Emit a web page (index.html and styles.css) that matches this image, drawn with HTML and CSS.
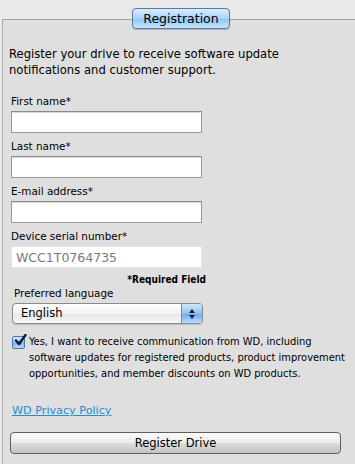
FILE: index.html
```html
<!DOCTYPE html>
<html lang="en">
<head>
    <meta charset="UTF-8">
    <meta name="viewport" content="width=device-width, initial-scale=1.0">
    <title>Registration</title>
    <link rel="stylesheet" href="styles.css">
</head>
<body>
    <div class="panel">
        <div class="tab">Registration</div>

        <p class="intro">Register your drive to receive software update notifications and customer support.</p>

        <div class="field">
            <label>First name*</label>
            <input type="text" class="text-input">
        </div>
        <div class="field">
            <label>Last name*</label>
            <input type="text" class="text-input">
        </div>
        <div class="field">
            <label>E-mail address*</label>
            <input type="text" class="text-input">
        </div>
        <div class="field">
            <label>Device serial number*</label>
            <input type="text" class="text-input serial" value="WCC1T0764735" readonly>
        </div>

        <div class="required">*Required Field</div>

        <div class="lang">
            <label>Preferred language</label>
            <div class="select">
                <span class="select-value">English</span>
                <span class="select-arrows">
                    <svg width="8" height="12" viewBox="0 0 8 12">
                        <path d="M4 1 L7 5 L1 5 Z" fill="#10204a"/>
                        <path d="M4 11 L7 7 L1 7 Z" fill="#10204a"/>
                    </svg>
                </span>
            </div>
        </div>

        <div class="optin">
            <span class="check">
                <svg width="14" height="14" viewBox="0 0 14 14">
                    <path d="M3 6.5 L6 10 L12.5 1" fill="none" stroke="#0c1a3a" stroke-width="2.4" stroke-linecap="round" stroke-linejoin="round"/>
                </svg>
            </span>
            <p>Yes, I want to receive communication from WD, including software updates for registered products, product improvement opportunities, and member discounts on WD products.</p>
        </div>

        <a href="#" class="privacy">WD Privacy Policy</a>

        <button class="register">Register Drive</button>
    </div>
</body>
</html>
```

FILE: styles.css
```css
body {
    margin: 0;
    background-color: #e9e9e9;
    font-family: "DejaVu Sans", "Liberation Sans", sans-serif;
    color: #000;
    height: 464px;
    overflow: hidden;
}
.panel {
    position: relative;
    box-sizing: border-box;
    height: 445px;
    margin: 19px 0 0 2px;
    border-top: 1px solid #a3a3a3;
    border-left: 1px solid #b0b0b0;
    background-color: #dfdfdf;
    padding: 26px 0 0 6px;
}
.tab {
    position: absolute;
    top: -12px;
    left: 129px;
    width: 96px;
    height: 19px;
    line-height: 19px;
    text-align: center;
    font-size: 12.5px;
    border: 1px solid #5a78a8;
    border-radius: 4px;
    background: linear-gradient(#d6ecff, #a9d3fb 50%, #8cc3f6 51%, #c5e6ff);
    box-shadow: 0 1px 1px rgba(0,0,0,0.2);
}
.intro {
    margin: 0 0 17px 0;
    font-size: 11.6px;
    line-height: 16px;
    width: 300px;
}
.field label,
.lang label {
    display: block;
    font-size: 10.4px;
    line-height: 13px;
    margin-left: 2px;
}
.field {
    margin-bottom: 7px;
}
.text-input {
    display: block;
    box-sizing: border-box;
    width: 191px;
    height: 22px;
    margin: 3px 0 0 2px;
    border: 1px solid #9a9a9a;
    border-top-color: #8a8a8a;
    background: #fff;
    box-shadow: inset 0 1px 1px rgba(0,0,0,0.15);
    font-family: inherit;
    font-size: 12.5px;
    padding: 0 4px;
    outline: none;
}
.serial {
    border-color: #e4e4e4;
    box-shadow: none;
    color: #7a7a7a;
}
.required {
    width: 197px;
    text-align: right;
    font-family: "DejaVu Sans Condensed", "DejaVu Sans", sans-serif;
    font-size: 10px;
    line-height: 13px;
    font-weight: bold;
    margin: -2px 0 1px 0;
}
.lang {
    margin-left: 3px;
}
.select {
    display: flex;
    box-sizing: border-box;
    width: 191px;
    height: 21px;
    margin-top: 3px;
    border: 1px solid #8a8a8a;
    border-radius: 4px;
    overflow: hidden;
    background: linear-gradient(#ffffff, #f2f2f2 50%, #e6e6e6 51%, #f7f7f7);
    box-shadow: 0 1px 1px rgba(0,0,0,0.15);
}
.select-value {
    flex: 1;
    font-size: 11.5px;
    line-height: 19px;
    padding-left: 8px;
}
.select-arrows {
    width: 20px;
    display: flex;
    align-items: center;
    justify-content: center;
    border-left: 1px solid #6b8cc4;
    background: linear-gradient(#cfe6fd, #8fc2f3 50%, #6aa9ec 51%, #b7dcfc);
}
.optin {
    display: flex;
    margin: 10px 0 0 3px;
}
.check {
    flex: none;
    box-sizing: border-box;
    width: 13px;
    height: 13px;
    margin-top: 2px;
    margin-right: 4px;
    border: 1px solid #5573a6;
    border-radius: 2px;
    background: linear-gradient(#d6ebff, #8ec1f2 50%, #6fa9e8 51%, #b9dcfb);
    position: relative;
}
.check svg {
    position: absolute;
    left: 0;
    top: -3px;
}
.optin p {
    margin: 0;
    font-family: "DejaVu Sans Condensed", "DejaVu Sans", sans-serif;
    font-size: 11px;
    line-height: 16px;
    width: 318px;
}
.privacy {
    display: inline-block;
    margin: 22px 0 0 3px;
    font-size: 11.2px;
    line-height: 14px;
    color: #1f8fd0;
}
.register {
    display: block;
    box-sizing: border-box;
    width: 331px;
    height: 22px;
    margin: 14px 0 0 1px;
    border: 1px solid #5f5f5f;
    border-radius: 4px;
    background: linear-gradient(#fbfbfb, #ececec 50%, #dcdcdc 51%, #c4c4c4);
    font-family: inherit;
    font-size: 11.5px;
    color: #000;
}
```
